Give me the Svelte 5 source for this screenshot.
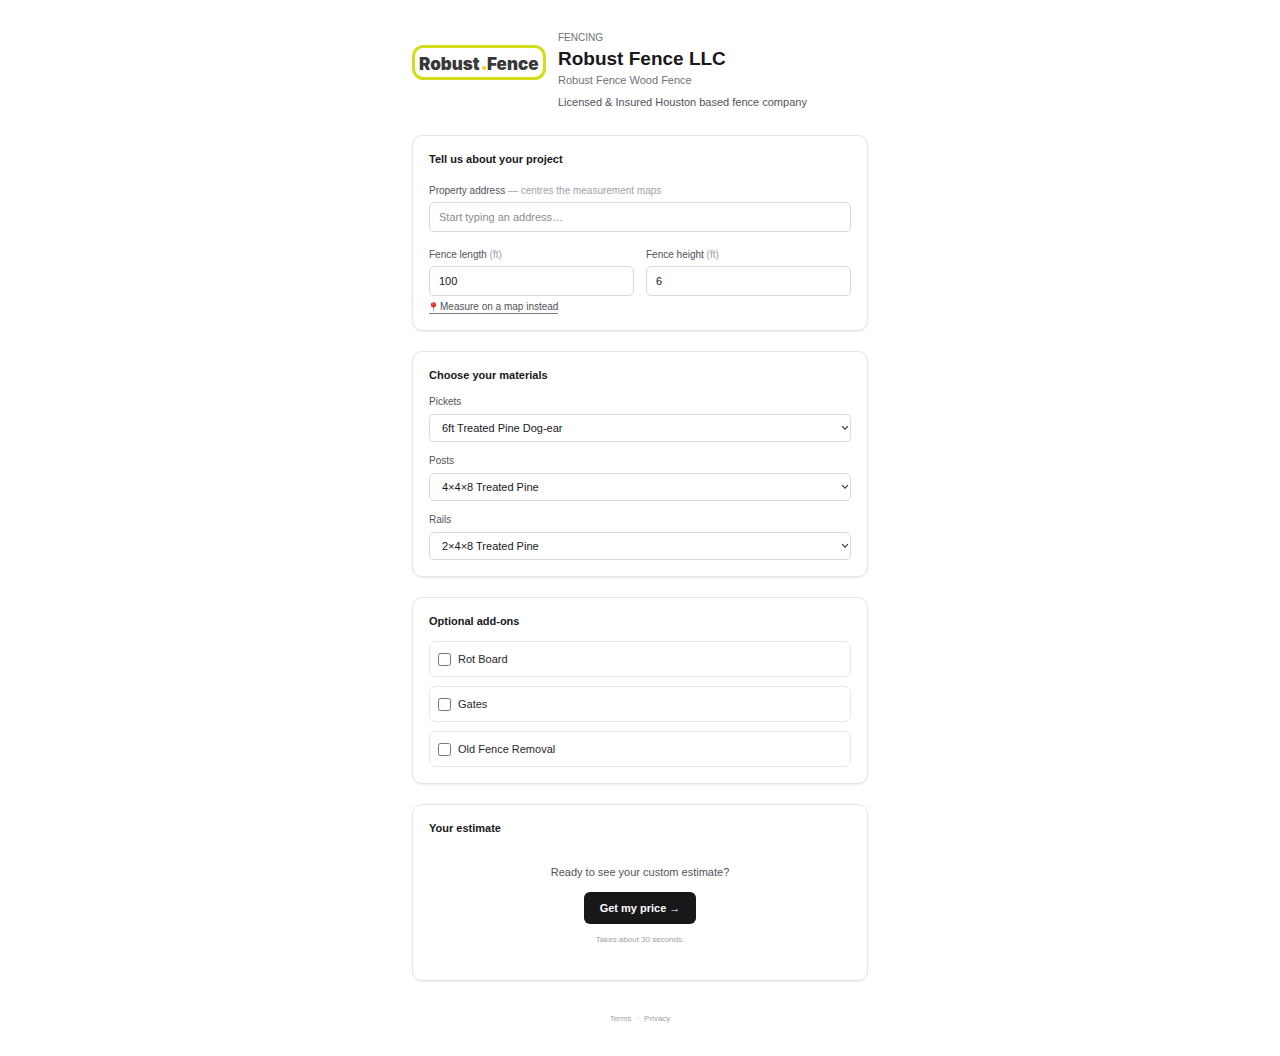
<script>
  const fenceFields = [
    { id: 'length', label: 'Fence length', unit: '(ft)', value: '100', map: true },
    { id: 'height', label: 'Fence height', unit: '(ft)', value: '6', map: false },
  ];
  const materials = [
    { id: 'pickets', label: 'Pickets', option: '6ft Treated Pine Dog-ear' },
    { id: 'posts', label: 'Posts', option: '4×4×8 Treated Pine' },
    { id: 'rails', label: 'Rails', option: '2×4×8 Treated Pine' },
  ];
  const addons = ['Rot Board', 'Gates', 'Old Fence Removal'];
</script>

<main class="page">
  <header class="head">
    <svg class="logo" viewBox="0 0 134 64" role="img" aria-label="Robust.Fence">
      <rect x="1.5" y="15.5" width="131" height="32" rx="10" fill="#fff" stroke="#d3de1a" stroke-width="3" />
      <text class="logo-text" x="7" y="39">Robust</text>
      <circle cx="72" cy="37" r="2" fill="#f2d21b" />
      <text class="logo-text" x="75" y="39">Fence</text>
    </svg>
    <div class="intro">
      <p class="eyebrow">Fencing</p>
      <h1>Robust Fence LLC</h1>
      <p class="sub">Robust Fence Wood Fence</p>
      <p class="about">Licensed &amp; Insured Houston based fence company</p>
    </div>
  </header>

  <section class="card">
    <h2 class="roomy">Tell us about your project</h2>
    <div class="field">
      <label for="address">Property address <span class="hint">— centres the measurement maps</span></label>
      <input id="address" type="text" placeholder="Start typing an address…" />
    </div>
    <div class="pair">
      {#each fenceFields as f}
        <div class="field">
          <label for={f.id}>{f.label} <span class="hint">{f.unit}</span></label>
          <input id={f.id} type="text" inputmode="numeric" value={f.value} />
          {#if f.map}
            <button type="button" class="map-link">
              <svg class="pin" viewBox="0 0 9 10" aria-hidden="true">
                <path d="M4 4.5h1l-.2 5h-.6z" fill="#8a9096" />
                <circle cx="4.5" cy="2.8" r="2.6" fill="#d8352f" />
                <circle cx="3.8" cy="2" r=".7" fill="#f39a94" />
              </svg>
              Measure on a map instead
            </button>
          {/if}
        </div>
      {/each}
    </div>
  </section>

  <section class="card">
    <h2>Choose your materials</h2>
    <div class="materials">
      {#each materials as m}
        <div class="material">
          <label for={m.id}>{m.label}</label>
          <div class="select-wrap">
            <select id={m.id}><option>{m.option}</option></select>
            <svg class="chevron" viewBox="0 0 8 6" aria-hidden="true">
              <path d="M1 1.2l3 3 3-3" fill="none" stroke="#333" stroke-width="1.1" />
            </svg>
          </div>
        </div>
      {/each}
    </div>
  </section>

  <section class="card">
    <h2>Optional add-ons</h2>
    <div class="addons">
      {#each addons as a}
        <label class="addon"><input type="checkbox" /><span>{a}</span></label>
      {/each}
    </div>
  </section>

  <section class="card">
    <h2>Your estimate</h2>
    <div class="estimate">
      <p class="ready">Ready to see your custom estimate?</p>
      <button type="button" class="cta">Get my price →</button>
      <p class="note">Takes about 30 seconds.</p>
    </div>
  </section>

  <footer>
    <a href="#terms">Terms</a><span>·</span><a href="#privacy">Privacy</a>
  </footer>
</main>

<style>
  :global(body) {
    margin: 0;
    background: #fff;
  }
  .page {
    box-sizing: border-box;
    max-width: 488px;
    margin: 0 auto;
    padding: 31px 16px;
    display: flex;
    flex-direction: column;
    gap: 20px;
    font-family: "Liberation Sans", Arial, sans-serif;
    font-size: 11px;
    line-height: 16px;
    color: #18181b;
  }
  p, h1, h2 {
    margin: 0;
  }
  .head {
    display: flex;
    gap: 12px;
    padding-bottom: 5px;
  }
  .logo {
    width: 134px;
    height: 64px;
    flex: none;
  }
  .logo-text {
    font-family: Inter, "Liberation Sans", sans-serif;
    font-size: 17px;
    font-weight: 900;
    fill: #38383a;
  }
  .eyebrow {
    font-size: 10px;
    line-height: 13px;
    text-transform: uppercase;
    color: #71717a;
  }
  h1 {
    margin-top: 2px;
    font-size: 19px;
    line-height: 26px;
  }
  .sub {
    color: #71717a;
  }
  .about {
    margin-top: 6px;
    color: #52525b;
  }
  .card {
    padding: 16px;
    border: 1px solid #e4e4e7;
    border-radius: 10px;
    box-shadow: 0 1px 2px rgba(0, 0, 0, 0.08);
  }
  h2 {
    margin-bottom: 12px;
    font-size: 11px;
    line-height: 15px;
  }
  .roomy {
    margin-bottom: 17px;
  }
  .field, .material {
    display: flex;
    flex-direction: column;
    min-width: 0;
  }
  .field {
    gap: 5px;
  }
  .material {
    gap: 6px;
  }
  .field label, .material label {
    font-size: 10px;
    line-height: 13px;
    color: #52525b;
  }
  .field .hint {
    color: #a1a1aa;
  }
  .field input, select {
    box-sizing: border-box;
    width: 100%;
    margin: 0;
    border: 1px solid #d9d9dd;
    border-radius: 5px;
    background: #fff;
    font: inherit;
    color: #18181b;
  }
  .field input {
    height: 30px;
    padding: 0 9px;
  }
  .field input::placeholder {
    color: #8b8b8f;
    opacity: 1;
  }
  .pair {
    display: grid;
    grid-template-columns: 1fr 1fr;
    gap: 12px;
    margin-top: 16px;
  }
  .map-link {
    align-self: flex-start;
    display: flex;
    align-items: center;
    gap: 2px;
    padding: 0;
    border: 0;
    border-bottom: 1px solid #7c7c82;
    background: none;
    font: inherit;
    font-size: 10px;
    line-height: 12px;
    color: #52525b;
    cursor: pointer;
  }
  .pin {
    width: 9px;
    height: 10px;
  }
  .materials {
    display: grid;
    gap: 12px;
  }
  .select-wrap {
    position: relative;
  }
  select {
    display: block;
    height: 28px;
    padding: 0 24px 0 12px;
    appearance: none;
  }
  .chevron {
    position: absolute;
    right: 2px;
    top: 11px;
    width: 8px;
    height: 6px;
    pointer-events: none;
  }
  .addons {
    display: grid;
    gap: 9px;
  }
  .addon {
    box-sizing: border-box;
    height: 36px;
    display: flex;
    align-items: center;
    gap: 7px;
    padding: 0 8px;
    border: 1px solid #e8e8ea;
    border-radius: 6px;
    color: #27272a;
  }
  .addon input {
    width: 13px;
    height: 13px;
    margin: 0;
  }
  .estimate {
    display: flex;
    flex-direction: column;
    align-items: center;
    padding: 16px 0 18px;
    text-align: center;
  }
  .ready {
    color: #52525b;
  }
  .cta {
    height: 32px;
    margin: 12px 0 10px;
    padding: 0 16px;
    border: 0;
    border-radius: 6px;
    background: #18181b;
    color: #fff;
    font: inherit;
    font-weight: 700;
    cursor: pointer;
  }
  .note, footer {
    font-size: 8px;
    line-height: 12px;
    color: #a1a1aa;
  }
  footer {
    display: flex;
    justify-content: center;
    gap: 5px;
    padding-top: 12px;
  }
  footer a {
    color: inherit;
    text-decoration: none;
  }
</style>
